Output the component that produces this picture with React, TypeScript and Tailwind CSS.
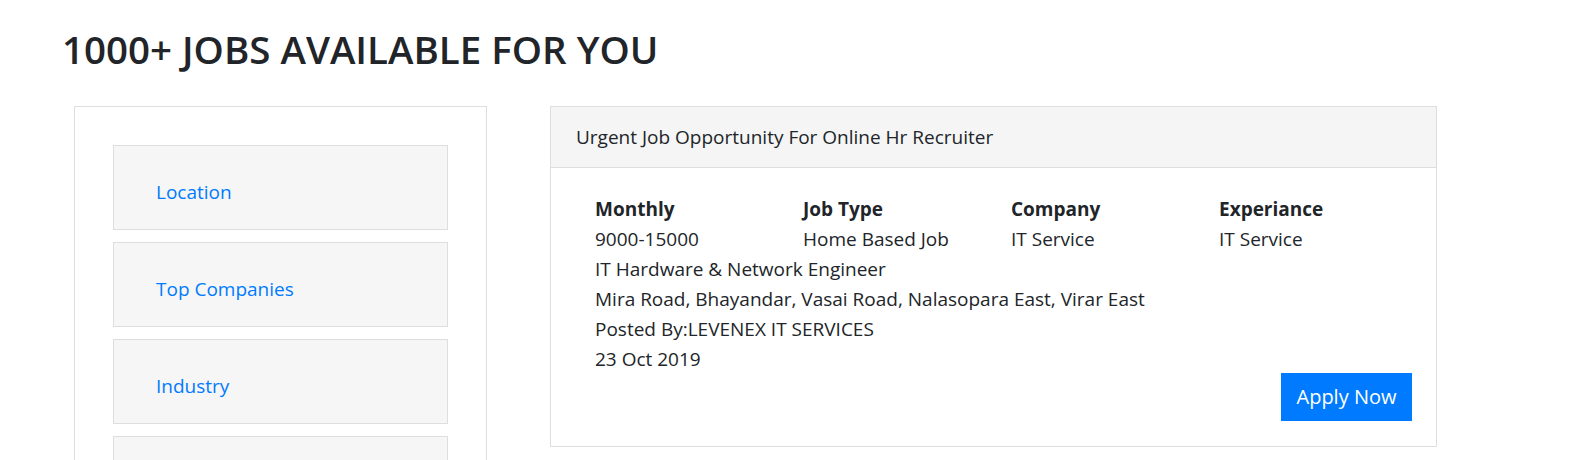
const filters = ["Location", "Top Companies", "Industry", ""];

function FilterItem({ label }: { label: string }) {
    return (
        <div className="h-[85px] shrink-0 bg-[#f6f6f6] border border-[#dedede] flex items-center pl-[42px] pt-[9px]">
            {label && <a href="#" className="text-[#007bff] text-[19px] leading-none">{label}</a>}
        </div>
    );
}

function JobCard() {
    const meta = [
        { title: "Monthly", value: "9000-15000" },
        { title: "Job Type", value: "Home Based Job" },
        { title: "Company", value: "IT Service" },
        { title: "Experiance", value: "IT Service" },
    ];

    return (
        <div className="w-[887px] border border-[#dedede] self-start">
            {/* header */}
            <div className="h-[61px] bg-[#f5f5f5] border-b border-[#dedede] flex items-center px-[25px] text-[19px] text-[#212529]">
                Urgent Job Opportunity For Online Hr Recruiter
            </div>

            <div className="pt-[26px] pb-[25px] pl-[44px] pr-[24px] text-[19px] leading-[30px] text-[#212529]">
                <div className="grid grid-cols-[208px_208px_208px_1fr]">
                    {meta.map((m) => (
                        <div key={m.title}>
                            <div className="font-bold">{m.title}</div>
                            <div>{m.value}</div>
                        </div>
                    ))}
                </div>
                <div>IT Hardware &amp; Network Engineer</div>
                <div>Mira Road, Bhayandar, Vasai Road, Nalasopara East, Virar East</div>
                <div>Posted By:LEVENEX IT SERVICES</div>
                <div>23 Oct 2019</div>
                <div className="flex justify-end -mt-[1px]">
                    <button className="h-[48px] w-[131px] bg-[#007bff] text-white text-[20px]">Apply Now</button>
                </div>
            </div>
        </div>
    );
}

export default function App() {
    return (
        <div className="font-['Open_Sans',sans-serif] bg-white h-[460px] overflow-hidden pl-[62px] pt-[24px]">
            <h1 className="text-[38.5px] leading-[50px] font-semibold text-[#212529]">1000+ JOBS AVAILABLE FOR YOU</h1>

            <div className="flex gap-[63px] mt-[32px] pl-[12px]">
                {/* filters */}
                <div className="w-[413px] h-[400px] border border-[#dedede] px-[38px] pt-[38px] flex flex-col gap-[12px]">
                    {filters.map((f, idx) => (
                        <FilterItem key={idx} label={f} />
                    ))}
                </div>

                <JobCard />
            </div>
        </div>
    );
}
